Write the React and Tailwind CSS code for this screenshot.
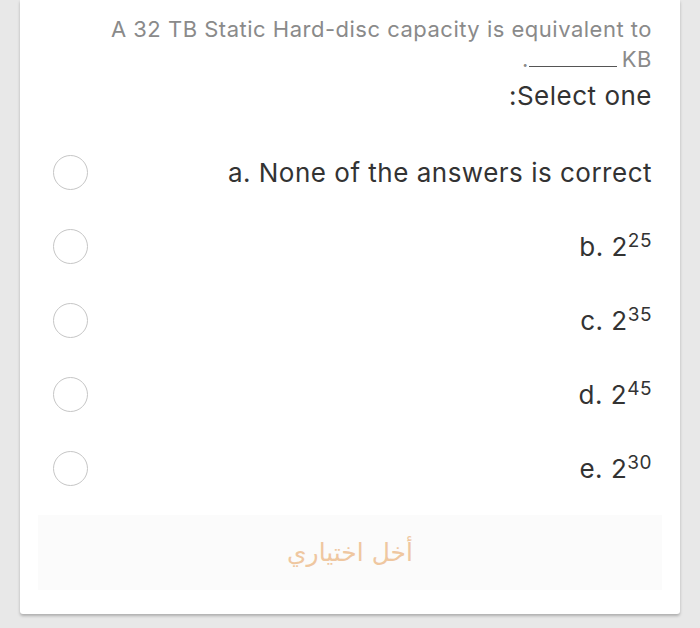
const options = [
  { label: "a.", text: "None of the answers is correct" },
  { label: "b.", base: "2", exp: "25" },
  { label: "c.", base: "2", exp: "35" },
  { label: "d.", base: "2", exp: "45" },
  { label: "e.", base: "2", exp: "30" },
];

const App = () => {
  return (
    <div
      className="min-h-[628px] bg-[#e8e8e8] px-5 overflow-hidden"
      style={{ fontFamily: 'Inter, "Liberation Sans", Arial, sans-serif' }}
    >
      <div className="bg-white rounded-b-[3px] shadow-[0_2px_3px_rgba(0,0,0,0.25)] pt-[14px] pb-[24px]">
        {/* Question */}
        <div className="pr-[28px] text-right">
          <p className="text-[22px] tracking-[0.5px] leading-[30px] text-[#8a8a8a]">
            A 32 TB Static Hard-disc capacity is equivalent to
          </p>
          <p className="text-[22px] tracking-[0.5px] leading-[30px] text-[#8a8a8a] flex justify-end items-end">
            <span>.</span>
            <span className="inline-block w-[88px] border-b border-[#555] mb-[7px] mr-[5px]" />
            <span>KB</span>
          </p>
          <p className="text-[26px] tracking-[0.5px] leading-[40px] text-[#333] mt-[2px]">:Select one</p>
        </div>

        {/* Options */}
        <div className="mt-[39px] flex flex-col gap-[39px]">
          {options.map((o) => (
            <div key={o.label} className="flex items-center justify-between pl-[33px] pr-[28px] h-[35px]">
              <span className="w-[35px] h-[35px] rounded-full border-[1.5px] border-[#c6c6c6] bg-white" />
              <span className="text-[26px] tracking-[0.5px] text-[#333] leading-[35px]">
                {o.label}{" "}
                {o.text ? (
                  o.text
                ) : (
                  <>
                    {o.base}
                    <sup className="text-[19px] top-[-0.5em]">{o.exp}</sup>
                  </>
                )}
              </span>
            </div>
          ))}
        </div>

        {/* Clear choice */}
        <div className="mt-[29px] mx-[18px] h-[75px] bg-[#fbfbfb] flex items-center justify-center">
          <span
            dir="rtl"
            className="text-[25px] text-[#efc7a0]"
            style={{ fontFamily: '"DejaVu Sans", sans-serif' }}
          >
            أخل اختياري
          </span>
        </div>
      </div>
    </div>
  );
};

export default App;
